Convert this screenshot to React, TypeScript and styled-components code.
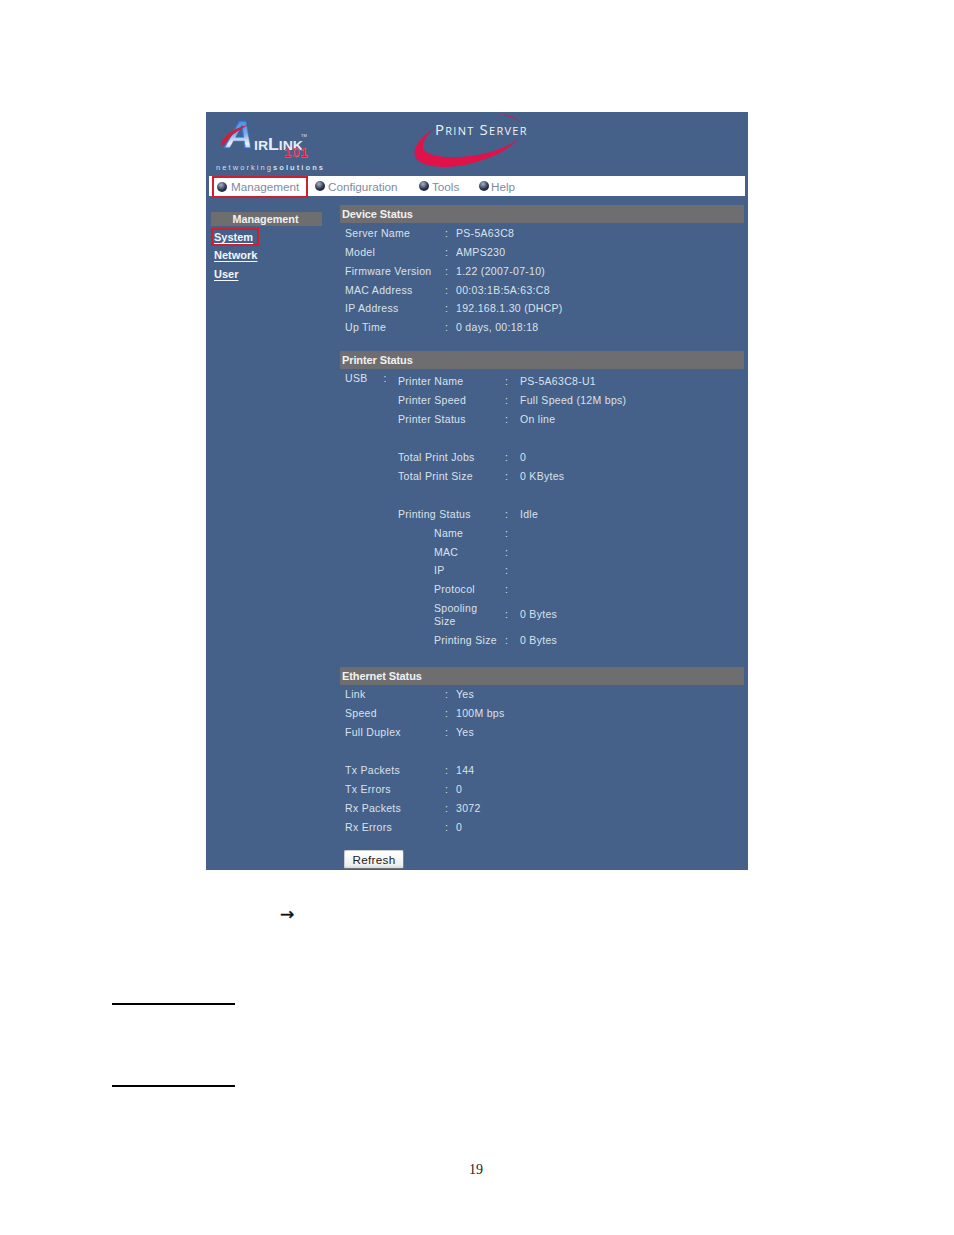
import React from "react";
import styled, { createGlobalStyle } from "styled-components";

const Global = createGlobalStyle`
  html, body { margin: 0; padding: 0; background: #fff; }
  body { font-family: "Liberation Sans", Arial, sans-serif; }
`;

const Page = styled.div`
  width: 954px;
  height: 1235px;
  overflow: hidden;
  padding-top: 112px;
  box-sizing: border-box;
`;
const Panel = styled.div`
  width: 542px;
  height: 758px;
  margin-left: 206px;
  background: #456089;
  color: #dce2ea;
  display: flex;
  flex-direction: column;
`;
const Header = styled.div`
  height: 64px;
  display: flex;
`;
const LogoArt = styled.svg`
  width: 125px;
  height: 64px;
  margin-left: 3px;
  flex: none;
`;
const TitleWrap = styled.div`
  position: relative;
  margin-left: 80px;
  width: 122px;
  height: 64px;
`;
const Swoosh = styled.svg`
  width: 122px;
  height: 64px;
  display: block;
`;
const Title = styled.div`
  position: absolute;
  left: 21px;
  top: 7px;
  font: 15px "Open Sans", "Liberation Sans", sans-serif;
  font-variant: small-caps;
  letter-spacing: 1.25px;
  white-space: nowrap;
  color: #f0f2f6;
`;
const Nav = styled.nav`
  height: 20px;
  margin: 0 3px;
  background: #fff;
  display: flex;
  align-items: flex-start;
`;
const NavItem = styled.div<{ $w: number; $active?: boolean; $gap: number; $left?: number }>`
  width: ${(p) => p.$w}px;
  height: 22px;
  box-sizing: border-box;
  flex: none;
  display: flex;
  align-items: center;
  gap: ${(p) => p.$gap}px;
  padding: 0 0 ${(p) => (p.$active ? 1 : 2)}px ${(p) => (p.$active ? 3 : 0)}px;
  margin-left: ${(p) => p.$left ?? 0}px;
  border: ${(p) => (p.$active ? "2px solid #cf1f2e" : "0")};
  font: 11.7px "Liberation Sans", sans-serif;
  color: #7d8ca3;
  position: relative;
  z-index: 1;
`;
const Bullet = styled.span`
  width: 10px;
  height: 10px;
  flex: none;
  border-radius: 50%;
  background: radial-gradient(circle at 40% 30%, #a9b3c7, #2a3350 55%, #10162b);
`;
const Body = styled.div`
  flex: 1;
  display: flex;
  min-height: 0;
`;
const Side = styled.aside`
  width: 111px;
  margin-left: 5px;
  padding-top: 16px;
  flex: none;
`;
const SideHead = styled.div`
  height: 14px;
  padding-right: 2px;
  background: #6e6e70;
  color: #f1f1f1;
  font: bold 10.8px/14px "Liberation Sans", sans-serif;
  text-align: center;
`;
const SideLink = styled.div<{ $active?: boolean }>`
  width: fit-content;
  height: 18px;
  box-sizing: border-box;
  margin-top: ${(p) => (p.$active ? 2 : 0)}px;
  padding: ${(p) => (p.$active ? "0 4px 0 1px" : "0 3px")};
  border: ${(p) => (p.$active ? "2px solid #cf1f2e" : "0")};
  font: bold 11px/${(p) => (p.$active ? 14 : 19)}px "Liberation Sans", sans-serif;
  color: #f4f6f9;
  text-decoration: underline;
  text-underline-offset: 2px;
  & + & {
    height: 19px;
  }
`;
const Main = styled.main`
  width: 404px;
  margin-left: 18px;
  padding-top: 9px;
  flex: none;
`;
const SectionHead = styled.div<{ $top?: number }>`
  height: 18px;
  margin-top: ${(p) => p.$top ?? 0}px;
  padding-left: 2px;
  background: #6e6e70;
  color: #f1f1f1;
  font: bold 11px/18px "Liberation Sans", sans-serif;
  letter-spacing: -0.1px;
`;
const Rows = styled.div<{ $pad?: number }>`
  padding-top: ${(p) => p.$pad ?? 0}px;
`;
const Row = styled.div<{ $h?: number }>`
  display: grid;
  grid-template-columns: 100px 11px 1fr;
  height: ${(p) => p.$h ?? 19}px;
  padding-left: 5px;
  font: 10.5px/19px "Liberation Sans", sans-serif;
  letter-spacing: 0.3px;
  white-space: nowrap;
`;
const Blank = styled.div`
  height: 19px;
`;
const PrinterBody = styled.div`
  display: flex;
`;
const UsbLabel = styled.div`
  width: 58px;
  padding-left: 5px;
  box-sizing: border-box;
  flex: none;
  display: flex;
  gap: 16px;
  font: 10.5px/19px "Liberation Sans", sans-serif;
  letter-spacing: 0.3px;
`;
const PrinterRows = styled.div`
  flex: 1;
  padding-top: 3px;
`;
const InnerRow = styled.div`
  display: grid;
  grid-template-columns: 107px 15px 1fr;
  height: 19px;
  font: 10.5px/19px "Liberation Sans", sans-serif;
  letter-spacing: 0.3px;
  white-space: nowrap;
`;
const NestedRow = styled(InnerRow)<{ $tall?: boolean }>`
  padding-left: 36px;
  grid-template-columns: 71px 15px 1fr;
  align-items: center;
  height: ${(p) => (p.$tall ? 32 : 18.7)}px;
`;
const Wrapped = styled.span`
  display: block;
  width: 50px;
  white-space: normal;
  line-height: 13px;
`;
const Refresh = styled.button`
  display: block;
  width: 60px;
  height: 19px;
  margin: 13px 0 0 4px;
  padding: 0;
  box-sizing: border-box;
  border: 1px solid #c8ccd0;
  border-right-color: #7f8388;
  border-bottom-color: #6f7378;
  border-radius: 2px;
  background: linear-gradient(#ffffff, #eef0f0 80%, #d8dadc);
  color: #222;
  font: 11.7px "Liberation Sans", sans-serif;
  letter-spacing: 0.3px;
`;
const Arrow = styled.div`
  margin: 33px 0 0 280px;
  height: 22px;
  font: 17px/22px "DejaVu Sans", sans-serif;
  -webkit-text-stroke: 0.4px #111;
  color: #111;
`;
const Rule = styled.div<{ $top: number }>`
  width: 123px;
  height: 2px;
  margin: ${(p) => p.$top}px 0 0 112px;
  background: #000;
`;
const PageNumber = styled.div`
  margin-top: 75px;
  padding-right: 2px;
  text-align: center;
  font: 14px/16px "Liberation Serif", serif;
  color: #222;
`;

const device = [
  ["Server Name", "PS-5A63C8"],
  ["Model", "AMPS230"],
  ["Firmware Version", "1.22 (2007-07-10)"],
  ["MAC Address", "00:03:1B:5A:63:C8"],
  ["IP Address", "192.168.1.30 (DHCP)"],
  ["Up Time", "0 days, 00:18:18"],
];
const eth: (string[] | null)[] = [
  ["Link", "Yes"],
  ["Speed", "100M bps"],
  ["Full Duplex", "Yes"],
  null,
  ["Tx Packets", "144"],
  ["Tx Errors", "0"],
  ["Rx Packets", "3072"],
  ["Rx Errors", "0"],
];
const printerA: (string[] | null)[] = [
  ["Printer Name", "PS-5A63C8-U1"],
  ["Printer Speed", "Full Speed (12M bps)"],
  ["Printer Status", "On line"],
  null,
  ["Total Print Jobs", "0"],
  ["Total Print Size", "0 KBytes"],
  null,
  ["Printing Status", "Idle"],
];

export default function App() {
  return (
    <Page>
      <Global />
      <Panel>
        <Header>
          <LogoArt viewBox="0 0 125 64">
            <defs>
              <linearGradient id="logoA" x1="0" y1="0" x2="0" y2="1">
                <stop offset="0" stopColor="#2d74d2" />
                <stop offset="0.5" stopColor="#7fb0ea" />
                <stop offset="0.72" stopColor="#eef4fc" />
                <stop offset="1" stopColor="#4f8ad6" />
              </linearGradient>
            </defs>
            <text x="16" y="36" fontFamily="Liberation Sans" fontWeight="bold" fontStyle="italic" fontSize="39.5" fill="url(#logoA)" stroke="#2d6cc4" strokeWidth="0.8">A</text>
            <path d="M12 31 C16 22 27 15 39 13 C30 18 22 23 18 29 C16 34 11 35 12 31 Z" fill="#c9213f" />
            <text x="45" y="38" fontFamily="Liberation Sans" fontWeight="bold" fontSize="13.5" fill="#e6edf7" textLength="49" lengthAdjust="spacingAndGlyphs">
              IR<tspan fontSize="17">L</tspan>INK
            </text>
            <text x="92" y="25" fontFamily="Liberation Sans" fontSize="4" fill="#dfe8f4">TM</text>
            <text x="75" y="45" fontFamily="Liberation Sans" fontWeight="bold" fontSize="13.5" fill="#cf1f38" stroke="#e9b9c0" strokeWidth="0.25" textLength="24">101</text>
            <text x="7" y="57.5" fontFamily="Liberation Sans" fontSize="7.5" fill="#d8dfe8" textLength="107">
              networking<tspan fontWeight="bold">solutions</tspan>
            </text>
          </LogoArt>
          <TitleWrap>
            <Swoosh viewBox="0 0 122 64">
              <path
                d="M22 15 C8 24 -2 35 1 44 C5 55 30 58 55 52 C75 47 95 38 104 27 C90 38 65 44 45 45 C25 46 10 42 9 36 C8 29 14 22 22 15 Z"
                fill="#e0124a"
              />
              <path d="M86 2 C94 3 102 5 106 10 C102 7 94 4 86 2 Z" fill="#e0124a" />
            </Swoosh>
            <Title>Print Server</Title>
          </TitleWrap>
        </Header>
        <Nav>
          <NavItem $active $w={96} $gap={4} $left={3}><Bullet />Management</NavItem>
          <NavItem $w={104} $gap={3} $left={7}><Bullet />Configuration</NavItem>
          <NavItem $w={60} $gap={3}><Bullet />Tools</NavItem>
          <NavItem $w={60} $gap={2}><Bullet />Help</NavItem>
        </Nav>
        <Body>
          <Side>
            <SideHead>Management</SideHead>
            <SideLink $active>System</SideLink>
            <SideLink>Network</SideLink>
            <SideLink>User</SideLink>
          </Side>
          <Main>
            <SectionHead>Device Status</SectionHead>
            <Rows $pad={1}>
              {device.map(([k, v]) => (
                <Row key={k} $h={18.85}><span>{k}</span><span>:</span><span>{v}</span></Row>
              ))}
            </Rows>
            <SectionHead $top={13.9}>Printer Status</SectionHead>
            <PrinterBody>
              <UsbLabel><span>USB</span><span>:</span></UsbLabel>
              <PrinterRows>
                {printerA.map((r, i) =>
                  r ? (
                    <InnerRow key={i}><span>{r[0]}</span><span>:</span><span>{r[1]}</span></InnerRow>
                  ) : (
                    <Blank key={i} />
                  ),
                )}
                <NestedRow><span>Name</span><span>:</span><span /></NestedRow>
                <NestedRow><span>MAC</span><span>:</span><span /></NestedRow>
                <NestedRow><span>IP</span><span>:</span><span /></NestedRow>
                <NestedRow><span>Protocol</span><span>:</span><span /></NestedRow>
                <NestedRow $tall><Wrapped>Spooling Size</Wrapped><span>:</span><span>0 Bytes</span></NestedRow>
                <NestedRow><span>Printing Size</span><span>:</span><span>0 Bytes</span></NestedRow>
              </PrinterRows>
            </PrinterBody>
            <SectionHead $top={18}>Ethernet Status</SectionHead>
            <Rows>
              {eth.map((r, i) =>
                r ? (
                  <Row key={i}><span>{r[0]}</span><span>:</span><span>{r[1]}</span></Row>
                ) : (
                  <Blank key={i} />
                ),
              )}
            </Rows>
            <Refresh>Refresh</Refresh>
          </Main>
        </Body>
      </Panel>
      <Arrow>→</Arrow>
      <Rule $top={78} />
      <Rule $top={80} />
      <PageNumber>19</PageNumber>
    </Page>
  );
}
